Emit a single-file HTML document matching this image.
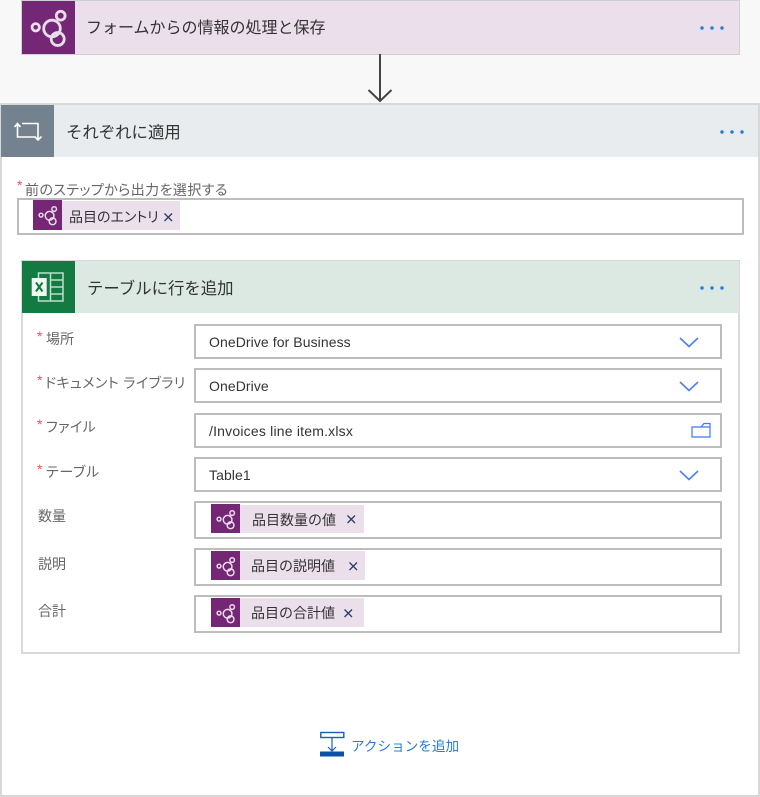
<!DOCTYPE html>
<html lang="ja">
<head>
<meta charset="utf-8">
<style>
html,body{margin:0;padding:0}
body{width:760px;height:797px;position:relative;overflow:hidden;background:#f8f8f8;font-family:"Liberation Sans","Noto Sans CJK JP",sans-serif;color:#333;filter:blur(.3px)}
.a{position:absolute;box-sizing:border-box;white-space:nowrap}
.hd{font-size:16px;line-height:22px;color:#333}
.lb{font-size:14px;line-height:18px;color:#666;font-feature-settings:"palt"}
.k{letter-spacing:.42px}
.st{color:#f0505a;font-size:14px;line-height:18px}
.box{background:#fff;border:2px solid #bdbdbd}
.v{font-size:14px;line-height:18px;color:#333;letter-spacing:.08px}
.tok{background:#ebdfeb}
.ic{background:#742774}
.t{font-size:14px;line-height:18px;color:#333}
svg{position:absolute;display:block;overflow:visible}
</style>
</head>
<body>
<svg width="0" height="0" style="position:absolute"><defs>
<g id="flow" fill="none" stroke="#eadcea" stroke-width="2.800">
<circle cx="7.700" cy="17.300" r="3.700"/><circle cx="24" cy="18.500" r="8.300"/><circle cx="32.700" cy="5.700" r="4.400"/><circle cx="29.700" cy="29" r="6.500"/>
</g>
<g id="dots" fill="#1a7fe0"><circle cx="2" cy="2" r="1.700"/><circle cx="12" cy="2" r="1.700"/><circle cx="22" cy="2" r="1.700"/></g>
<path id="chev" d="M1 1 L10 9.500 L19 1" fill="none" stroke="#4f7df0" stroke-width="1.600"/>
<path id="xx" d="M.5 .5 L8 8 M8 .5 L.5 8" fill="none" stroke="#2b3a67" stroke-width="1.300"/>
</defs></svg>

<!-- top card -->
<div class="a" style="left:21px;top:0;width:719px;height:55px;background:#ebdfeb;border:1px solid #cfcfcf"></div>
<div class="a ic" style="left:22px;top:1px;width:53px;height:53px"></div>
<svg style="left:28px;top:10px" width="40" height="36"><use href="#flow"/></svg>
<div class="a hd" style="left:86px;top:18px">フォームからの情報の処理と保存</div>
<svg style="left:700px;top:26px" width="24" height="4"><use href="#dots"/></svg>

<!-- arrow -->
<svg style="left:360px;top:54px" width="40" height="50"><path d="M20 0 V47 M8.500 36 L20 47 L31.500 36" fill="none" stroke="#444" stroke-width="2"/></svg>

<!-- apply card -->
<div class="a" style="left:0;top:103px;width:760px;height:694px;background:#fff;border:2px solid #d8d8d8"></div>
<div class="a" style="left:1px;top:105px;width:757px;height:52px;background:#e9ecef"></div>
<div class="a" style="left:1px;top:105px;width:53px;height:52px;background:#74818f"></div>
<svg style="left:14px;top:121px" width="28" height="22"><path d="M.5 6 L3.500 2.500 L6.500 6 M3.500 2.500 V16 H21 M8 2.500 H24 V19 M20.500 15.500 L24 19 L27.500 15.500" fill="none" stroke="#fff" stroke-width="1.600"/></svg>
<div class="a hd" style="left:66px;top:122px;font-size:16.400px">それぞれに適用</div>
<svg style="left:720px;top:130px" width="24" height="4"><use href="#dots"/></svg>

<div class="a st" style="left:17px;top:176px">*</div>
<div class="a lb k" style="left:25px;top:181px">前のステップから出力を選択する</div>
<div class="a box" style="left:17px;top:198px;width:727px;height:37px"></div>
<div class="a tok" style="left:33px;top:201px;width:147px;height:29px"></div>
<div class="a ic" style="left:33px;top:200px;width:29px;height:30px"></div>
<svg style="left:37px;top:206px" width="21" height="19" viewBox="0 0 40 36"><use href="#flow"/></svg>
<div class="a t" style="left:69px;top:208px;font-feature-settings:'palt'">品目のエントリ</div>
<svg style="left:164px;top:213px" width="9" height="9"><use href="#xx"/></svg>

<!-- excel card -->
<div class="a" style="left:21px;top:260px;width:719px;height:394px;background:#fff;border:2px solid #d8d8d8"></div>
<div class="a" style="left:22px;top:261px;width:717px;height:52px;background:#dbe9e2"></div>
<div class="a" style="left:22px;top:261px;width:53px;height:52px;background:#137a42"></div>
<svg style="left:30px;top:272px" width="36" height="30">
<rect x="8.500" y="1" width="24.500" height="28" fill="none" stroke="#bfdccc" stroke-width="1.500"/>
<path d="M20.500 1 V29 M20.500 8 H33 M20.500 15 H33 M20.500 22 H33" stroke="#bfdccc" stroke-width="1.500" fill="none"/>
<rect x="1.700" y="6" width="15" height="18" fill="#f0f6f2"/>
<path d="M6 10.500 L12.500 19.500 M12.500 10.500 L6 19.500" stroke="#137a42" stroke-width="2"/>
</svg>
<div class="a hd" style="left:87px;top:278px;font-size:16.400px">テーブルに行を追加</div>
<svg style="left:700px;top:286px" width="24" height="4"><use href="#dots"/></svg>

<!-- rows -->
<div class="a st" style="left:37px;top:327px">*</div><div class="a lb" style="left:46px;top:330px">場所</div>
<div class="a box" style="left:194px;top:324px;width:528px;height:35px"></div>
<div class="a v" style="left:209px;top:333px">OneDrive for Business</div>
<svg style="left:679px;top:337px" width="20" height="11"><use href="#chev"/></svg>

<div class="a st" style="left:37px;top:371px">*</div><div class="a lb k" style="left:45px;top:374px">ドキュメント ライブラリ</div>
<div class="a box" style="left:194px;top:368px;width:528px;height:35px"></div>
<div class="a v" style="left:209px;top:377px">OneDrive</div>
<svg style="left:679px;top:381px" width="20" height="11"><use href="#chev"/></svg>

<div class="a st" style="left:37px;top:415px">*</div><div class="a lb k" style="left:46px;top:418px">ファイル</div>
<div class="a box" style="left:194px;top:413px;width:528px;height:35px"></div>
<div class="a v" style="left:209px;top:422px;letter-spacing:.2px">/Invoices line item.xlsx</div>
<svg style="left:691px;top:422px" width="20" height="16"><path d="M1 5 H10 L13 1.500 H19 V15 H1 Z M10 5 H19" fill="none" stroke="#3f78f0" stroke-width="1.200"/></svg>

<div class="a st" style="left:37px;top:460px">*</div><div class="a lb" style="left:46px;top:463px;letter-spacing:.7px">テーブル</div>
<div class="a box" style="left:194px;top:457px;width:528px;height:35px"></div>
<div class="a v" style="left:209px;top:466px">Table1</div>
<svg style="left:679px;top:470px" width="20" height="11"><use href="#chev"/></svg>

<div class="a lb" style="left:38px;top:507px">数量</div>
<div class="a box" style="left:194px;top:501px;width:528px;height:38px"></div>
<div class="a tok" style="left:211px;top:505px;width:153px;height:28px"></div>
<div class="a ic" style="left:211px;top:504px;width:29px;height:29px"></div>
<svg style="left:215px;top:510px" width="21" height="19" viewBox="0 0 40 36"><use href="#flow"/></svg>
<div class="a t" style="left:252px;top:511px">品目数量の値</div>
<svg style="left:346.500px;top:515px" width="9" height="9"><use href="#xx"/></svg>

<div class="a lb" style="left:38px;top:555px">説明</div>
<div class="a box" style="left:194px;top:548px;width:528px;height:38px"></div>
<div class="a tok" style="left:211px;top:551px;width:154px;height:29px"></div>
<div class="a ic" style="left:211px;top:551px;width:29px;height:29px"></div>
<svg style="left:215px;top:557px" width="21" height="19" viewBox="0 0 40 36"><use href="#flow"/></svg>
<div class="a t" style="left:251px;top:557px">品目の説明値</div>
<svg style="left:349px;top:562px" width="9" height="9"><use href="#xx"/></svg>

<div class="a lb" style="left:38px;top:602px">合計</div>
<div class="a box" style="left:194px;top:595px;width:528px;height:38px"></div>
<div class="a tok" style="left:211px;top:598px;width:153px;height:29px"></div>
<div class="a ic" style="left:211px;top:598px;width:29px;height:29px"></div>
<svg style="left:215px;top:604px" width="21" height="19" viewBox="0 0 40 36"><use href="#flow"/></svg>
<div class="a t" style="left:251px;top:604px">品目の合計値</div>
<svg style="left:344px;top:609px" width="9" height="9"><use href="#xx"/></svg>

<!-- add action -->
<svg style="left:320px;top:731px" width="25" height="26">
<rect x="0.800" y="1.500" width="23" height="5" fill="none" stroke="#1a5fb0" stroke-width="1.400"/>
<path d="M12 7 V20 M8 16 L12 20 L16 16" fill="none" stroke="#1a5fb0" stroke-width="1.200"/>
<rect x="0" y="20.500" width="24" height="5" fill="#0a52a8"/>
</svg>
<div class="a" style="left:351px;top:738px;font-size:13.600px;line-height:18px;color:#2b7cd3">アクションを追加</div>
</body>
</html>
